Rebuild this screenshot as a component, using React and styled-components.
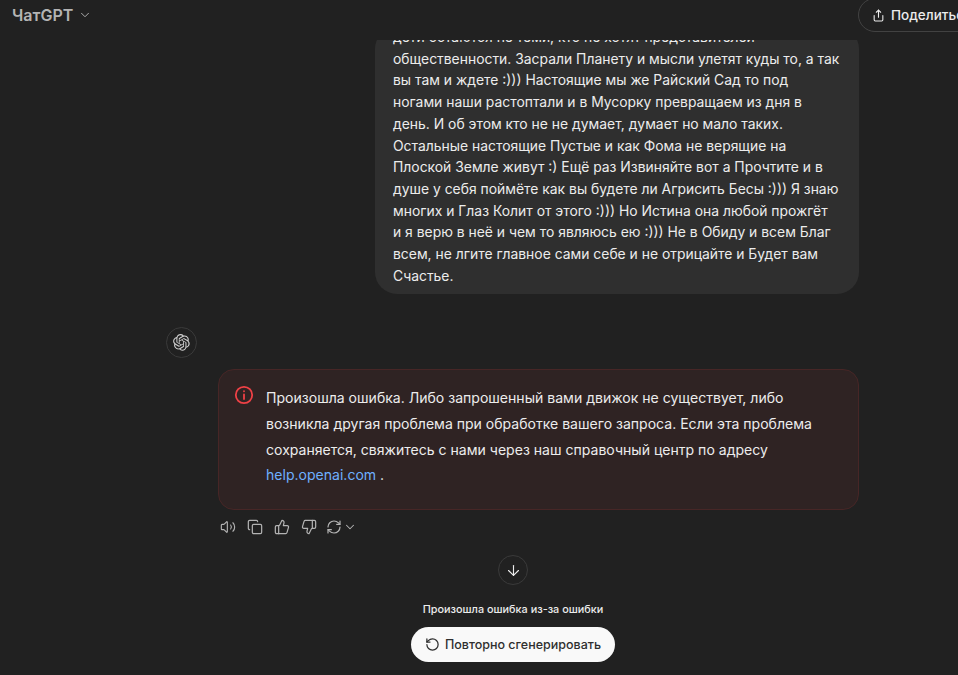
import React from 'react'
import styled, { createGlobalStyle } from 'styled-components'
import { ChevronDown, ArrowDown, RotateCcw, Share, Copy, ThumbsUp, ThumbsDown, RefreshCw, Volume2 } from 'lucide-react'

const GlobalStyle = createGlobalStyle`
  html, body {
    margin: 0;
    height: 100%;
    background: #212121;
  }
  body {
    font-family: Inter, "Liberation Sans", sans-serif;
    color: #ececec;
  }
`

const OpenAiLogo = ({ size = 18 }) => (
  <svg width={size} height={size} viewBox="0 0 41 41" fill="none">
    <path
      d="M37.5 16.7a9.9 9.9 0 0 0-.9-8.2 10.1 10.1 0 0 0-10.9-4.8A10 10 0 0 0 18.2.3a10.100 10.100 0 0 0-9.600 7 10 10 0 0 0-6.700 4.800 10.100 10.100 0 0 0 1.200 11.800 9.900 9.900 0 0 0 .9 8.200 10.100 10.100 0 0 0 10.900 4.800 10 10 0 0 0 7.500 3.400 10.100 10.100 0 0 0 9.600-7 10 10 0 0 0 6.700-4.800 10.100 10.100 0 0 0-1.200-11.800ZM22.500 37.700a7.500 7.500 0 0 1-4.800-1.700l.2-.1 8-4.600a1.300 1.300 0 0 0 .7-1.200V18.800l3.400 1.900v9.500a7.500 7.500 0 0 1-7.500 7.500ZM6.300 30.800a7.500 7.500 0 0 1-.9-5l.2.100 8 4.600a1.300 1.300 0 0 0 1.300 0l9.800-5.600v3.900l-8.100 4.700a7.500 7.500 0 0 1-10.300-2.700ZM4.200 13.400a7.500 7.500 0 0 1 3.900-3.300v9.500a1.300 1.300 0 0 0 .7 1.100l9.700 5.600-3.400 1.900-8.100-4.600a7.500 7.500 0 0 1-2.800-10.200Zm27.700 6.500-9.700-5.700 3.400-1.900 8.100 4.700a7.500 7.500 0 0 1-1.200 13.500v-9.400a1.300 1.300 0 0 0-.6-1.200Zm3.300-5.100-.2-.1-8-4.700a1.300 1.300 0 0 0-1.300 0l-9.800 5.700v-3.900l8.100-4.700a7.500 7.500 0 0 1 11.200 7.700ZM14 21.800l-3.400-1.900v-9.500a7.500 7.500 0 0 1 12.300-5.700l-.2.100-8 4.600a1.300 1.300 0 0 0-.7 1.200Zm1.800-4 4.400-2.500 4.400 2.500v5l-4.300 2.500-4.400-2.500Z"
      fill="currentColor"
    />
  </svg>
)

const Page = styled.div`
  width: 958px;
  height: 675px;
  overflow: hidden;
  display: flex;
  flex-direction: column;
  background: #212121;
`

const Header = styled.header`
  height: 40px;
  flex: none;
  display: flex;
  align-items: center;
  justify-content: space-between;
  padding-left: 12px;
  box-sizing: border-box;
`

const ModelName = styled.div`
  display: flex;
  align-items: center;
  gap: 5px;
  font-size: 16px;
  font-weight: 600;
  color: #b4b4b4;
  margin-top: -10px;
`

const ShareButton = styled.button`
  flex: none;
  display: flex;
  align-items: center;
  gap: 6px;
  width: 130px;
  height: 34px;
  margin: -10px -30px 0 0;
  padding: 0 0 0 13px;
  background: transparent;
  border: 1px solid #424242;
  border-radius: 17px;
  color: #ececec;
  font: 500 13.5px Inter, sans-serif;
  white-space: nowrap;
  overflow: hidden;
  box-sizing: border-box;
`

const Main = styled.main`
  flex: 1;
  min-height: 0;
  overflow: hidden;
  display: flex;
  flex-direction: column;
`

const UserRow = styled.div`
  display: flex;
  justify-content: flex-end;
  padding-right: 99px;
`

const Bubble = styled.div`
  width: 484px;
  box-sizing: border-box;
  margin-top: -13px;
  padding: 0 19px 7px 18px;
  background: #2f2f2f;
  border-radius: 22px;
  font-size: 13.9px;
  line-height: 21.7px;
  color: #ececec;
`

const AssistantRow = styled.div`
  display: flex;
  gap: 21px;
  margin: 33px 99px 0 166px;
`

const Avatar = styled.div`
  flex: none;
  width: 31px;
  height: 31px;
  box-sizing: border-box;
  border: 1px solid #3a3a3a;
  border-radius: 50%;
  display: flex;
  align-items: center;
  justify-content: center;
  color: #d0d0d0;
`

const AssistantBody = styled.div`
  flex: 1;
  padding-top: 42px;
`

const ErrorBox = styled.div`
  display: flex;
  gap: 12px;
  height: 141px;
  box-sizing: border-box;
  padding: 15px 16px 0 15px;
  background: #2f2323;
  border: 1px solid #472626;
  border-radius: 16px;
`

const ErrorText = styled.p`
  margin: 0;
  font-size: 14.05px;
  line-height: 25.6px;
  color: #ececec;
`

const HelpLink = styled.a`
  color: #6eb0ff;
`

const Actions = styled.div`
  display: flex;
  align-items: center;
  gap: 11px;
  margin-top: 9px;
  padding-left: 2px;
  color: #b4b4b4;
`

const RegenGroup = styled.span`
  display: flex;
  align-items: center;
  gap: 1px;
  margin-left: -2px;
`

const Footer = styled.div`
  display: flex;
  flex-direction: column;
  align-items: center;
  margin-top: 20px;
  padding-left: 68px;
`

const ScrollDown = styled.div`
  width: 30px;
  height: 30px;
  box-sizing: border-box;
  border: 1px solid #3a3a3a;
  border-radius: 50%;
  display: flex;
  align-items: center;
  justify-content: center;
  color: #ececec;
`

const FooterNote = styled.div`
  margin-top: 16px;
  font-size: 10.85px;
  font-weight: 500;
  line-height: 16px;
  color: #ececec;
`

const RetryButton = styled.button`
  display: flex;
  align-items: center;
  gap: 5px;
  height: 35px;
  margin-top: 10px;
  padding: 0 14px 0 14px;
  background: #f9f9f9;
  border: none;
  border-radius: 18px;
  color: #2f2f2f;
  font: 500 12.5px Inter, sans-serif;
`

const App = () => (
  <>
    <GlobalStyle />
    <Page>
      <Header>
        <ModelName>
          ЧатGPT
          <ChevronDown size={14} strokeWidth={1.6} />
        </ModelName>
        <ShareButton>
          <Share size={13} strokeWidth={2} />
          Поделиться
        </ShareButton>
      </Header>
      <Main>
        <UserRow>
          <Bubble>
            дети остаются не теми, кто не хотят представителей общественности. Засрали Планету и мысли улетят куды то, а так вы там и ждете :))) Настоящие мы же Райский Сад то под ногами наши растоптали и в Мусорку превращаем из дня в день. И об этом кто не не думает, думает но мало таких. Остальные настоящие Пустые и как Фома не верящие на Плоской Земле живут :) Ещё раз Извиняйте вот а Прочтите и в душе у себя поймёте как вы будете ли Агрисить Бесы :))) Я знаю многих и Глаз Колит от этого :))) Но Истина она любой прожгёт и&nbsp;я верю в неё и чем то являюсь ею :))) Не в Обиду и всем Благ всем, не лгите главное сами себе и не отрицайте и Будет вам Счастье.
          </Bubble>
        </UserRow>
        <AssistantRow>
          <Avatar>
            <OpenAiLogo size={17} />
          </Avatar>
          <AssistantBody>
            <ErrorBox>
              <svg width="20" height="20" viewBox="0 0 20 20" fill="none" stroke="#ef4146" strokeWidth="1.8" strokeLinecap="round" style={{ flex: 'none' }}>
                <circle cx="10" cy="10" r="8.2" />
                <path d="M10 9.500v4.500M10 6.200v.1" />
              </svg>
              <ErrorText>
                Произошла ошибка. Либо запрошенный вами движок не существует, либо возникла другая проблема при обработке вашего запроса. Если эта проблема сохраняется, свяжитесь с нами через наш справочный центр по адресу <HelpLink>help.openai.com</HelpLink> .
              </ErrorText>
            </ErrorBox>
            <Actions>
              <Volume2 size={16} strokeWidth={1.7} />
              <Copy size={16} strokeWidth={1.8} />
              <ThumbsUp size={16} strokeWidth={1.8} />
              <ThumbsDown size={16} strokeWidth={1.8} />
              <RegenGroup>
                <RefreshCw size={16} strokeWidth={1.8} />
                <ChevronDown size={14} strokeWidth={1.8} />
              </RegenGroup>
            </Actions>
          </AssistantBody>
        </AssistantRow>
        <Footer>
          <ScrollDown>
            <ArrowDown size={17} strokeWidth={1.6} />
          </ScrollDown>
          <FooterNote>Произошла ошибка из-за ошибки</FooterNote>
          <RetryButton>
            <RotateCcw size={15} strokeWidth={2} />
            Повторно сгенерировать
          </RetryButton>
        </Footer>
      </Main>
    </Page>
  </>
)

export default App
